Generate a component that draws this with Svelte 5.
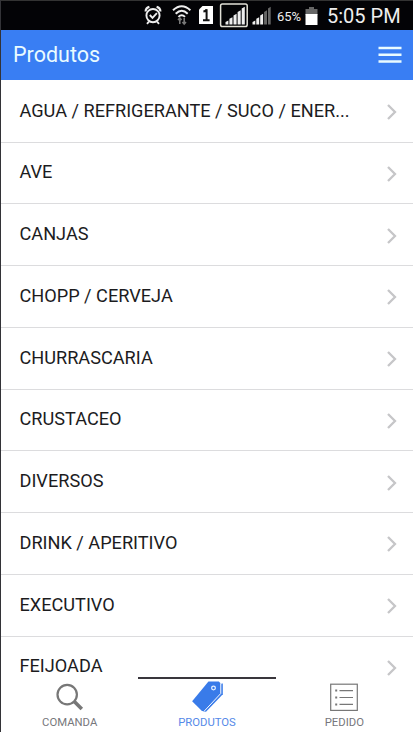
<script>
  const items = [
    'AGUA / REFRIGERANTE / SUCO / ENERGETICO',
    'AVE',
    'CANJAS',
    'CHOPP / CERVEJA',
    'CHURRASCARIA',
    'CRUSTACEO',
    'DIVERSOS',
    'DRINK / APERITIVO',
    'EXECUTIVO',
    'FEIJOADA'
  ];
  const label = (name) => (name.length > 33 ? name.slice(0, 33) + '...' : name);
</script>

<div class="phone">
  <div class="status">
    <svg width="140" height="29" viewBox="142 1 140 29" fill="none">
      <g stroke="#eee" stroke-width="1.9">
        <circle cx="153" cy="15.6" r="6.6" />
        <path d="M149.8 15l2.7 2.8 4.4-4.6M149 21.5l-2 2.4M157 21.5l2 2.4" />
        <path d="M145.6 11.4q0-3.4 3.8-4.5M160.4 11.4q0-3.4-3.8-4.5" stroke-width="2.2" />
      </g>
      <g stroke="#eee" stroke-width="2">
        <path d="M173 10.3q8.7-8.2 17.4 0M175.7 13.7q6-5.8 12 0M178.4 16.9q3.3-3.2 6.6 0" />
      </g>
      <path d="M179.8 24v-6M184.2 18v6M178 20l1.8-2 1.8 2M182.4 22l1.8 2 1.8-2" stroke="#777" stroke-width="1.6" />
      <path d="M199 9.5l3.5-3.5H213v18h-14z" fill="#fff" />
      <path d="M203.4 11.6q2.6-.4 3.2-2.4v10.8M203 20.2h6.6" stroke="#111" stroke-width="2" />
      <rect x="220.6" y="3.9" width="26.6" height="22.6" rx="1.8" stroke="#e2e1d8" stroke-width="1.5" />
      <g fill="#eee">
        <path d="M225.5 22l2.9-1.5V24.5h-2.9zM229.4 18.8l3.1-1.6v7.3h-3.1zM233.5 15.5l3.1-1.7v10.7h-3.1zM237.6 12l3.1-1.8v14.3h-3.1zM241.7 8.5l3.1-1.8v17.8h-3.1z" />
        <path d="M252.5 22l2.8-1.5v4h-2.8zM256.3 18.8l2.9-1.6v7.3h-2.9zM260.2 15.5l2.9-1.7v10.7h-2.9z" />
      </g>
      <path d="M264.1 12l2.9-1.8v14.3h-2.9zM268 8.5l2.7-1.8v17.8H268z" fill="#666" />
    </svg>
    <span class="percent">65%</span>
    <svg class="battery" width="13" height="20" viewBox="0 0 13 20">
      <path d="M4 1h5v2h3.5v6H.5V3H4z" fill="#666" />
      <path d="M.5 8h12v11H.5z" fill="#fff" />
    </svg>
    <span class="clock">5:05 PM</span>
  </div>

  <header>
    <h1>Produtos</h1>
    <svg width="24" height="18" viewBox="0 0 24 18">
      <path d="M.5 1.9h23M.5 8.7h23M.5 15.5h23" stroke="#e9fbff" stroke-width="2.5" />
    </svg>
  </header>

  <ul>
    {#each items as item}
      <li>
        <span>{label(item)}</span>
        <svg width="12" height="18" viewBox="0 0 12 18">
          <path d="M2 2l7 7-7 7" fill="none" stroke="#c6c6c8" stroke-width="2.3" />
        </svg>
      </li>
    {/each}
  </ul>

  <nav>
    <div class="tab">
      <svg width="32" height="34" viewBox="0 0 32 34" fill="none" stroke="#777">
        <circle cx="13.2" cy="15.6" r="9.7" stroke-width="2.2" />
        <path d="M20.3 22.5l7.5 7.5" stroke-width="3.6" />
      </svg>
      <span>COMANDA</span>
    </div>
    <div class="tab active">
      <svg width="34" height="35" viewBox="0 0 34 35">
        <path d="M32 4.6h1.3v11.2L16 33.8l-3.2-.6z" fill="#397be9" />
        <path d="M18.5 2.6h10.7l2 2v10.2L14.2 33.2l-2.4-.2L1.7 22.8z" fill="#397be9" />
        <path d="M31.2 4.4v10.5L13.8 33.4" fill="none" stroke="#fff" stroke-width="1" />
        <circle cx="23.7" cy="9.3" r="1.9" fill="#397be9" stroke="#e8f2ff" stroke-width="1.3" />
      </svg>
      <span>PRODUTOS</span>
    </div>
    <div class="tab">
      <svg width="28" height="34" viewBox="0 0 28 34" fill="none" stroke="#777">
        <rect x=".7" y="5.2" width="26.6" height="26.2" stroke-width="1.2" />
        <path d="M9.5 11.6H23M9.5 18.5H23M9.5 25.4H23" stroke-width="1.2" />
        <path d="M5.2 11.6h2M5.2 18.5h2M5.2 25.4h2" stroke-width="2" />
      </svg>
      <span>PEDIDO</span>
    </div>
  </nav>
</div>

<style>
  :global(body) {
    margin: 0;
    background: #fff;
  }
  .phone {
    width: 413px;
    height: 732px;
    box-sizing: border-box;
    display: flex;
    flex-direction: column;
    overflow: hidden;
    background: #fff;
    border-left: 1px solid #333337;
    font-family: Roboto, 'Liberation Sans', sans-serif;
    color: #1c1c1e;
  }
  .status {
    flex: 0 0 30px;
    box-sizing: border-box;
    display: flex;
    align-items: center;
    padding-left: 141px;
    background: #030306;
    border-top: 1px solid #333;
    color: #eee;
    white-space: nowrap;
  }
  .status svg {
    flex: none;
  }
  .percent {
    width: 28px;
    margin-left: -5px;
    padding-top: 2px;
    font-size: 13px;
  }
  .clock {
    margin-left: 9px;
    padding-top: 1px;
    font-size: 20px;
  }
  header {
    flex: 0 0 50px;
    box-sizing: border-box;
    display: flex;
    align-items: center;
    justify-content: space-between;
    padding: 0 11px 0 12px;
    background: #397ef3;
  }
  h1 {
    margin: 0;
    font-size: 21.5px;
    line-height: 50px;
    font-weight: 400;
    color: #e9fbff;
  }
  ul {
    flex: 1 1 0;
    min-height: 0;
    overflow: hidden;
    margin: 0;
    padding: 0.75px 0 0;
    list-style: none;
  }
  li {
    box-sizing: border-box;
    height: 61.75px;
    display: flex;
    align-items: center;
    justify-content: space-between;
    padding: 0 15px 0 18.5px;
    border-bottom: 1px solid #dcdcde;
    font-size: 18.15px;
    white-space: nowrap;
  }
  li span {
    padding-bottom: 2px;
  }
  li svg {
    margin-top: 2px;
  }
  nav {
    flex: 0 0 55px;
    display: flex;
    background: #fff;
  }
  .tab {
    position: relative;
    flex: 1;
    display: flex;
    flex-direction: column;
    align-items: center;
    font-size: 11.3px;
    line-height: 13px;
    color: #77777b;
  }
  .tab svg {
    height: 34px;
    margin-top: 2px;
  }
  .tab span {
    margin-top: 3px;
  }
  .active {
    color: #5589e8;
  }
  .active::before {
    content: '';
    position: absolute;
    top: 0;
    left: 0;
    right: 0;
    height: 2px;
    background: #39363c;
  }
</style>
